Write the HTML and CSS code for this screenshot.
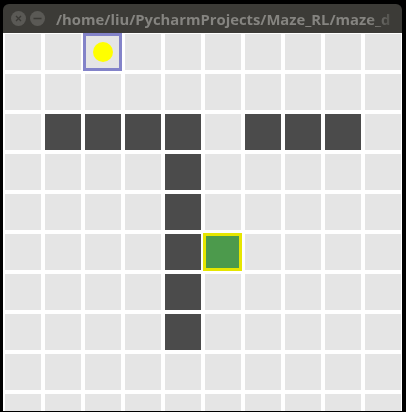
FILE: index.html
```html
<!DOCTYPE html>
<html>
<head>
<meta charset="utf-8">
<link rel="stylesheet" href="styles.css">
</head>
<body>
<div class="window">
  <div class="titlebar">
    <div class="buttons">
      <span class="btn">
        <svg width="15" height="15" viewBox="0 0 15 15"><path d="M5 5 L10 10 M10 5 L5 10" stroke="#3a3935" stroke-width="1.3" fill="none"/></svg>
      </span>
      <span class="btn">
        <svg width="15" height="15" viewBox="0 0 15 15"><path d="M3.5 7.5 H11.5" stroke="#3a3935" stroke-width="1.6" fill="none"/></svg>
      </span>
    </div>
    <div class="title">/home/liu/PycharmProjects/Maze_RL/maze_d</div>
  </div>
  <div class="canvas">
    <div class="grid">
      <div class="cell"></div><div class="cell"></div><div class="cell agent"><span class="frame purple"></span><span class="dot"></span></div><div class="cell"></div><div class="cell"></div><div class="cell"></div><div class="cell"></div><div class="cell"></div><div class="cell"></div><div class="cell"></div>
      <div class="cell"></div><div class="cell"></div><div class="cell"></div><div class="cell"></div><div class="cell"></div><div class="cell"></div><div class="cell"></div><div class="cell"></div><div class="cell"></div><div class="cell"></div>
      <div class="cell"></div><div class="cell wall"></div><div class="cell wall"></div><div class="cell wall"></div><div class="cell wall"></div><div class="cell"></div><div class="cell wall"></div><div class="cell wall"></div><div class="cell wall"></div><div class="cell"></div>
      <div class="cell"></div><div class="cell"></div><div class="cell"></div><div class="cell"></div><div class="cell wall"></div><div class="cell"></div><div class="cell"></div><div class="cell"></div><div class="cell"></div><div class="cell"></div>
      <div class="cell"></div><div class="cell"></div><div class="cell"></div><div class="cell"></div><div class="cell wall"></div><div class="cell"></div><div class="cell"></div><div class="cell"></div><div class="cell"></div><div class="cell"></div>
      <div class="cell"></div><div class="cell"></div><div class="cell"></div><div class="cell"></div><div class="cell wall"></div><div class="cell goal"><span class="frame yellow"></span></div><div class="cell"></div><div class="cell"></div><div class="cell"></div><div class="cell"></div>
      <div class="cell"></div><div class="cell"></div><div class="cell"></div><div class="cell"></div><div class="cell wall"></div><div class="cell"></div><div class="cell"></div><div class="cell"></div><div class="cell"></div><div class="cell"></div>
      <div class="cell"></div><div class="cell"></div><div class="cell"></div><div class="cell"></div><div class="cell wall"></div><div class="cell"></div><div class="cell"></div><div class="cell"></div><div class="cell"></div><div class="cell"></div>
      <div class="cell"></div><div class="cell"></div><div class="cell"></div><div class="cell"></div><div class="cell"></div><div class="cell"></div><div class="cell"></div><div class="cell"></div><div class="cell"></div><div class="cell"></div>
      <div class="cell"></div><div class="cell"></div><div class="cell"></div><div class="cell"></div><div class="cell"></div><div class="cell"></div><div class="cell"></div><div class="cell"></div><div class="cell"></div><div class="cell"></div>
    </div>
  </div>
</div>
</body>
</html>
```

FILE: styles.css
```css
html, body {
  margin: 0;
  padding: 0;
  background: #000;
  width: 406px;
  height: 412px;
  overflow: hidden;
}

.window {
  margin: 4px 0 0 3px;
  width: 399px;
}

.titlebar {
  height: 29px;
  background: #3c3b37;
  border-radius: 6px 6px 0 0;
  display: flex;
  align-items: center;
  overflow: hidden;
}

.buttons {
  display: flex;
  gap: 4px;
  padding-left: 8px;
  flex: none;
}

.btn {
  width: 15px;
  height: 15px;
  border-radius: 50%;
  background: #5a5955;
  display: flex;
}

.title {
  margin-left: 11px;
  font-family: "Open Sans", sans-serif;
  font-weight: bold;
  font-size: 14.8px;
  color: #858480;
  white-space: nowrap;
  flex: none;
  -webkit-mask-image: linear-gradient(to right, #000 0, #000 312px, rgba(0,0,0,0.2) 338px);
  mask-image: linear-gradient(to right, #000 0, #000 312px, rgba(0,0,0,0.2) 338px);
}

.canvas {
  background: #fff;
  height: 378px;
  overflow: hidden;
  padding: 1px 0 0 2px;
  box-sizing: border-box;
}

.grid {
  display: grid;
  grid-template-columns: repeat(10, 36px);
  grid-auto-rows: 36px;
  gap: 4px;
}

.cell {
  background: #e5e5e5;
  position: relative;
}

.cell.wall {
  background: #4b4b4b;
}

.cell.goal {
  background: #4c9a4c;
}

.frame {
  position: absolute;
  left: -2px;
  top: -1px;
  width: 39px;
  height: 38px;
  box-sizing: border-box;
  border: 3px solid;
}

.frame.purple {
  border-color: #8383c9;
}

.frame.yellow {
  border-color: #e6e600;
}

.dot {
  position: absolute;
  left: 8px;
  top: 8px;
  width: 20px;
  height: 20px;
  border-radius: 50%;
  background: #ffff00;
}
```
